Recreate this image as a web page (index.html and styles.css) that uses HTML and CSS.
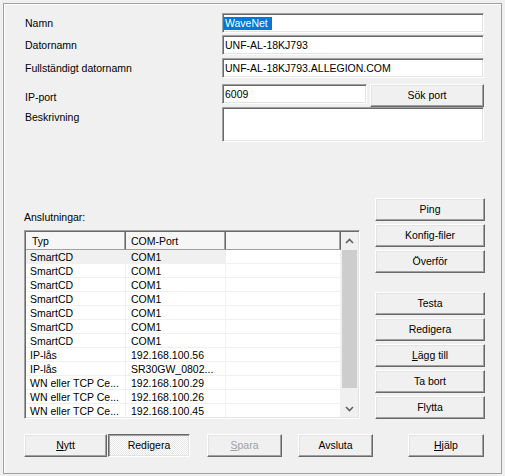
FILE: index.html
```html
<!DOCTYPE html>
<html lang="sv">
<head>
<meta charset="utf-8">
<title>WaveNet</title>
<link rel="stylesheet" href="styles.css">
</head>
<body>
<div class="frame">
  <div class="form">
    <div class="row r1">
      <div class="lbl">Namn</div>
      <div class="field wide"><span class="sel">WaveNet</span></div>
    </div>
    <div class="row r2">
      <div class="lbl">Datornamn</div>
      <div class="field wide">UNF-AL-18KJ793</div>
    </div>
    <div class="row r3">
      <div class="lbl">Fullständigt datornamn</div>
      <div class="field wide">UNF-AL-18KJ793.ALLEGION.COM</div>
    </div>
    <div class="row r4">
      <div class="lbl lbl-ip">IP-port</div>
      <div class="ipgroup">
        <div class="field port">6009</div>
        <div class="btn btn-sok">Sök port</div>
      </div>
    </div>
    <div class="row r5">
      <div class="lbl lbl-desc">Beskrivning</div>
      <div class="field desc"></div>
    </div>
  </div>

  <div class="lower">
    <div class="leftcol">
      <div class="conn-label">Anslutningar:</div>
      <div class="list">
        <div class="table">
          <div class="hrow">
            <div class="hcell c1">Typ</div>
            <div class="hcell c2">COM-Port</div>
            <div class="hcell c3"></div>
          </div>
          <div class="trow hot"><div class="cell c1">SmartCD</div><div class="cell c2">COM1</div><div class="cell c3"></div></div>
          <div class="trow"><div class="cell c1">SmartCD</div><div class="cell c2">COM1</div><div class="cell c3"></div></div>
          <div class="trow"><div class="cell c1">SmartCD</div><div class="cell c2">COM1</div><div class="cell c3"></div></div>
          <div class="trow"><div class="cell c1">SmartCD</div><div class="cell c2">COM1</div><div class="cell c3"></div></div>
          <div class="trow"><div class="cell c1">SmartCD</div><div class="cell c2">COM1</div><div class="cell c3"></div></div>
          <div class="trow"><div class="cell c1">SmartCD</div><div class="cell c2">COM1</div><div class="cell c3"></div></div>
          <div class="trow"><div class="cell c1">SmartCD</div><div class="cell c2">COM1</div><div class="cell c3"></div></div>
          <div class="trow"><div class="cell c1">IP-lås</div><div class="cell c2">192.168.100.56</div><div class="cell c3"></div></div>
          <div class="trow"><div class="cell c1">IP-lås</div><div class="cell c2">SR30GW_0802...</div><div class="cell c3"></div></div>
          <div class="trow"><div class="cell c1">WN eller TCP Ce...</div><div class="cell c2">192.168.100.29</div><div class="cell c3"></div></div>
          <div class="trow"><div class="cell c1">WN eller TCP Ce...</div><div class="cell c2">192.168.100.26</div><div class="cell c3"></div></div>
          <div class="trow"><div class="cell c1">WN eller TCP Ce...</div><div class="cell c2">192.168.100.45</div><div class="cell c3"></div></div>
        </div>
        <div class="sb">
          <div class="sb-arrow">
            <svg width="9" height="6" viewBox="0 0 9 6"><polyline points="1,5 4.5,1.5 8,5" fill="none" stroke="#606060" stroke-width="1.6"/></svg>
          </div>
          <div class="sb-track">
            <div class="sb-thumb"></div>
          </div>
          <div class="sb-arrow">
            <svg width="9" height="6" viewBox="0 0 9 6"><polyline points="1,1 4.5,4.5 8,1" fill="none" stroke="#606060" stroke-width="1.6"/></svg>
          </div>
        </div>
      </div>
    </div>
    <div class="rightcol">
      <div class="btn">Ping</div>
      <div class="btn">Konfig-filer</div>
      <div class="btn">Överför</div>
      <div class="btn btn-testa">Testa</div>
      <div class="btn">Redigera</div>
      <div class="btn"><u>L</u>ägg till</div>
      <div class="btn">Ta bort</div>
      <div class="btn">Flytta</div>
    </div>
  </div>

  <div class="bottom">
    <div class="btn b-nytt"><u>N</u>ytt</div>
    <div class="btn pressed b-red">Redigera</div>
    <div class="btn disabled b-spara"><u>S</u>para</div>
    <div class="btn b-avs">Avsluta</div>
    <div class="btn b-hjalp"><u>H</u>jälp</div>
  </div>
</div>
</body>
</html>
```
FILE: styles.css
```css
html, body {
  margin: 0;
  padding: 0;
  background: #f0f0f0;
}
body {
  font-family: "Liberation Sans", Arial, sans-serif;
  font-size: 10.5px;
  color: #000;
}
.frame {
  margin: 3px;
  width: 497px;
  height: 469px;
  border: 1px solid #a0a0a0;
  box-shadow: inset 1px 1px #fff;
}
.form {
  padding: 9px 0 0 21px;
}
.row {
  display: flex;
  height: 20px;
}
.r2 { margin-top: 2px; }
.r3 { margin-top: 3px; }
.r4 { margin-top: 6px; height: 23px; }
.r5 { height: 35px; }
.lbl {
  width: 197px;
  flex: none;
  line-height: 21px;
  white-space: nowrap;
}
.lbl-ip { line-height: 13px; padding-top: 7px; }
.lbl-desc { line-height: 13px; padding-top: 4px; }

.field {
  box-sizing: border-box;
  height: 20px;
  background: #fff;
  border: 1px solid;
  border-color: #a0a0a0 #fff #fff #a0a0a0;
  box-shadow: inset 1px 1px #696969, inset -1px -1px #e3e3e3;
  padding: 2px 2px 0 2px;
  line-height: 14px;
  white-space: nowrap;
  overflow: hidden;
}
.wide { width: 262px; }
.sel {
  display: inline-block;
  background: #0078d7;
  color: #fff;
  padding: 0 4px 0 1px;
  margin-left: -1px;
  line-height: 13px;
  margin-top: 1px;
}
.ipgroup {
  display: flex;
  gap: 3px;
  width: 262px;
}
.port { width: 145px; }
.desc { width: 262px; height: 35px; }

.btn {
  box-sizing: border-box;
  height: 23px;
  background: #f0f0f0;
  border: 1px solid;
  border-color: #fff #696969 #696969 #fff;
  box-shadow: inset -1px -1px #a0a0a0, inset 1px 1px #e3e3e3;
  display: flex;
  align-items: center;
  justify-content: center;
  white-space: nowrap;
  padding-bottom: 1px;
}
.btn u { text-decoration: underline; text-underline-offset: 1px; }
.btn-sok { width: 114px; }

.lower {
  display: flex;
  margin-top: 56px;
  padding-left: 20px;
}
.leftcol { width: 336px; }
.conn-label {
  margin-top: 13px;
  line-height: 13px;
  margin-bottom: 6px;
}
.list {
  box-sizing: border-box;
  width: 336px;
  height: 189px;
  border: 1px solid;
  border-color: #a0a0a0 #fff #fff #a0a0a0;
  box-shadow: inset 1px 1px #696969, inset -1px -1px #e3e3e3;
  padding: 1px;
  display: flex;
  background: #fff;
}
.table {
  width: 315px;
  overflow: hidden;
  background: #fff;
}
.hrow {
  display: flex;
  height: 18px;
}
.hcell {
  box-sizing: border-box;
  height: 18px;
  background: #f6f6f6;
  border-right: 1px solid #696969;
  border-bottom: 1px solid #a0a0a0;
  box-shadow: inset -1px 0 #a0a0a0;
  line-height: 18px;
  padding-left: 6px;
}
.hcell.c2 { padding-left: 5px; }
.c1 { width: 100px; flex: none; }
.c2 { width: 100px; flex: none; }
.c3 { width: 115px; flex: none; }
.trow {
  display: flex;
  height: 14px;
}
.cell {
  box-sizing: border-box;
  height: 14px;
  line-height: 15px;
  border-bottom: 1px solid #f0f0f0;
  border-right: 1px solid #f0f0f0;
  padding-left: 4px;
  white-space: nowrap;
}
.cell.c2 { padding-left: 5px; }
.hot .c1, .hot .c2 { background: #f0f0f0; border-right-color: #f0f0f0; }

.sb {
  width: 17px;
  flex: none;
  background: #f0f0f0;
  display: flex;
  flex-direction: column;
}
.sb-arrow {
  height: 17px;
  flex: none;
  display: flex;
  align-items: center;
  justify-content: center;
}
.sb-track {
  flex: 1;
  padding: 1px 1px 0 1px;
}
.sb-thumb {
  height: 138px;
  background: #cdcdcd;
}

.rightcol {
  margin-left: 15px;
  width: 110px;
  display: flex;
  flex-direction: column;
  gap: 3px;
}
.btn-testa { margin-top: 16px; }

.bottom {
  display: flex;
  margin-top: 15px;
  padding-left: 20px;
}
.b-nytt { width: 83px; }
.b-red { width: 82px; margin-left: 1px; }
.b-spara { width: 75px; margin-left: 17px; }
.b-avs { width: 75px; margin-left: 16px; }
.b-hjalp { width: 76px; margin-left: 35px; }
.pressed {
  border-color: #696969 #fff #fff #696969;
  box-shadow: inset 1px 1px #a0a0a0, inset -1px -1px #e3e3e3;
  background-color: #f0f0f0;
  background-image: repeating-conic-gradient(#fff 0 25%, #e6e6e6 0 50%);
  background-size: 2px 2px;
}
.disabled { color: #a0a0a0; }
```
